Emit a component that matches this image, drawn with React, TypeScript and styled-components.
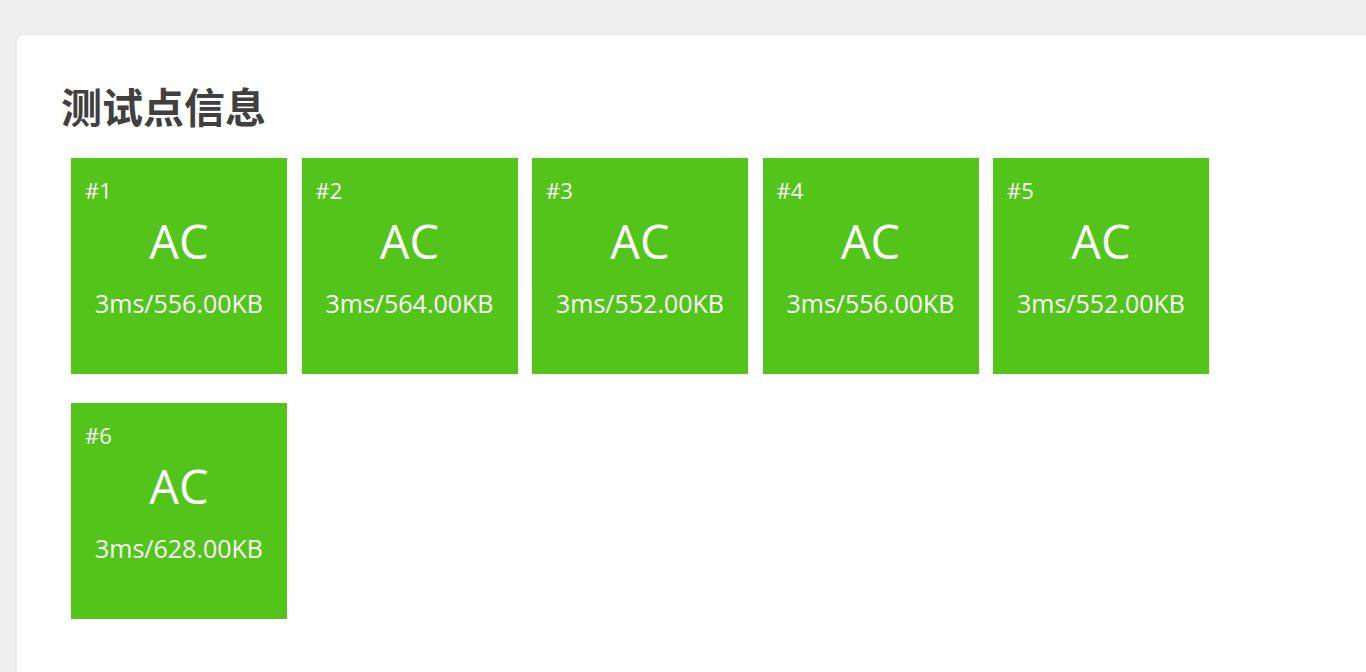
import React from "react";
import styled, { createGlobalStyle } from "styled-components";

const Global = createGlobalStyle`
  html, body { margin: 0; padding: 0; background: #efefef; overflow: hidden; }
  body { font-family: "Open Sans", "Noto Sans CJK SC", sans-serif; }
`;

const Card = styled.div`
  margin: 35px -60px 0 17px;
  min-height: 700px;
  background: #fff;
  border-radius: 7px;
  box-shadow: 0 0 4px rgba(0, 0, 0, 0.06);
  padding: 44px 48px;
  box-sizing: border-box;
`;

const Title = styled.h2`
  margin: -2px 0 25px -4px;
  font-family: "Noto Sans CJK SC", "Microsoft YaHei", sans-serif;
  font-weight: 700;
  font-size: 41px;
  line-height: 56px;
  color: #404040;
`;

const Grid = styled.div`
  display: flex;
  flex-wrap: wrap;
  width: 1160px;
  column-gap: 14.5px;
  row-gap: 29px;
  padding-left: 6px;
`;

const Tile = styled.div`
  width: 216px;
  height: 216px;
  background: #52c41a;
  color: #fff;
  box-sizing: border-box;
  padding: 18px 14px 0;
  display: flex;
  flex-direction: column;
`;

const Num = styled.div`
  font-size: 22px;
  line-height: 28px;
`;

const Status = styled.div`
  text-align: center;
  font-size: 47px;
  line-height: 60px;
  margin-top: 7px;
`;

const Stat = styled.div`
  text-align: center;
  font-size: 25px;
  line-height: 30px;
  margin-top: 17px;
  white-space: nowrap;
`;

const cases = [
  "3ms/556.00KB",
  "3ms/564.00KB",
  "3ms/552.00KB",
  "3ms/556.00KB",
  "3ms/552.00KB",
  "3ms/628.00KB",
];

export default function App() {
  return (
    <>
      <Global />
      <Card>
        <Title>测试点信息</Title>
        <Grid>
          {cases.map((c, i) => (
            <Tile key={i}>
              <Num>#{i + 1}</Num>
              <Status>AC</Status>
              <Stat>{c}</Stat>
            </Tile>
          ))}
        </Grid>
      </Card>
    </>
  );
}
